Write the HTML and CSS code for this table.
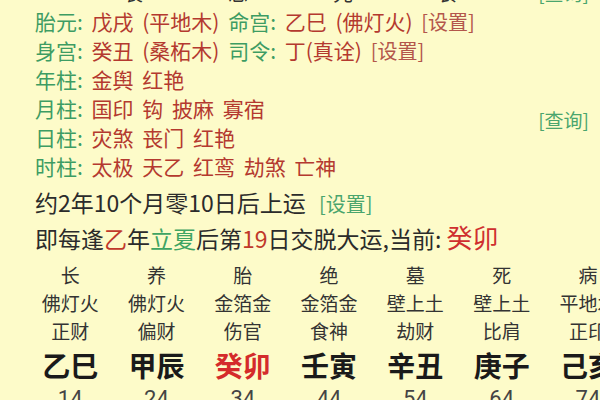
FILE: index.html
```html
<!DOCTYPE html>
<html lang="zh-CN">
<head>
<meta charset="utf-8">
<title>八字</title>
<link rel="stylesheet" href="styles.css">
</head>
<body>
<div class="page">
  <div class="cut-row">
    <span class="cut-chars">
      <span class="cut-c">衰</span><span class="cut-c">忌</span><span class="cut-c">先</span><span class="cut-c">食</span>
    </span>
    <span class="link link-green">[查询]</span>
  </div>
  <div class="info">
    <div class="row"><span class="lbl">胎元: </span><span class="val">戊戌 (平地木)</span> <span class="lbl">命宫: </span><span class="val">乙巳 (佛灯火)</span> <span class="link link-red">[设置]</span></div>
    <div class="row"><span class="lbl">身宫: </span><span class="val">癸丑 (桑柘木)</span> <span class="lbl">司令: </span><span class="val">丁(真诠)</span> <span class="link link-red">[设置]</span></div>
    <div class="row"><span class="lbl">年柱: </span><span class="val">金舆 红艳</span></div>
    <div class="row"><span class="lbl">月柱: </span><span class="val">国印 钩 披麻 寡宿</span></div>
    <div class="row"><span class="lbl">日柱: </span><span class="val">灾煞 丧门 红艳</span></div>
    <div class="row"><span class="lbl">时柱: </span><span class="val">太极 天乙 红鸾 劫煞 亡神</span></div>
    <span class="link link-green query">[查询]</span>
  </div>
  <div class="yun">
    <div class="yun-row">约2年10个月零10日后上运 <span class="link link-green small">[设置]</span></div>
    <div class="yun-row">即每逢<span class="red">乙</span>年<span class="green">立夏</span>后第<span class="red">19</span>日交脱大运,当前: <span class="cur">癸卯</span></div>
  </div>
  <div class="dayun">
    <div class="col"><div class="c1">长</div><div class="c2">佛灯火</div><div class="c3">正财</div><div class="c4">乙巳</div><div class="c5">14</div></div>
    <div class="col"><div class="c1">养</div><div class="c2">佛灯火</div><div class="c3">偏财</div><div class="c4">甲辰</div><div class="c5">24</div></div>
    <div class="col"><div class="c1">胎</div><div class="c2">金箔金</div><div class="c3">伤官</div><div class="c4 hot">癸卯</div><div class="c5">34</div></div>
    <div class="col"><div class="c1">绝</div><div class="c2">金箔金</div><div class="c3">食神</div><div class="c4">壬寅</div><div class="c5">44</div></div>
    <div class="col"><div class="c1">墓</div><div class="c2">壁上土</div><div class="c3">劫财</div><div class="c4">辛丑</div><div class="c5">54</div></div>
    <div class="col"><div class="c1">死</div><div class="c2">壁上土</div><div class="c3">比肩</div><div class="c4">庚子</div><div class="c5">64</div></div>
    <div class="col"><div class="c1">病</div><div class="c2">平地木</div><div class="c3">正印</div><div class="c4">己亥</div><div class="c5">74</div></div>
  </div>
</div>
</body>
</html>
```

FILE: styles.css
```css
html, body {
  margin: 0;
  padding: 0;
}
body {
  width: 600px;
  height: 400px;
  overflow: hidden;
  background: #fdfbc9;
  font-family: "Noto Sans CJK SC", "Noto Sans", sans-serif;
  color: #2a2a2a;
}
.page {
  width: 600px;
  height: 400px;
  overflow: hidden;
}
.cut-row {
  display: flex;
  justify-content: space-between;
  align-items: center;
  height: 29px;
  margin-top: -22px;
  padding: 0 11px 0 0;
  font-size: 20px;
  line-height: 29px;
}
.cut-chars {
  display: flex;
  padding-left: 123px;
  gap: 85px;
  color: #333;
}
.cut-c {
  width: 20px;
}
.info {
  display: grid;
  grid-template-columns: 1fr auto;
  padding: 0 11px 0 35px;
}
.row {
  grid-column: 1;
  font-size: 21px;
  line-height: 29px;
  word-spacing: 4px;
  white-space: nowrap;
}
.lbl { color: #3d9c63; }
.val { color: #b4392f; }
.link { font-size: 19px; }
.row .link { font-size: 20px; }
.link-red { color: #b3564b; }
.link-green { color: #4aa56d; }
.query {
  grid-column: 2;
  grid-row: 4 / 6;
  align-self: center;
  padding-bottom: 8px;
}
.yun {
  padding-left: 35px;
  padding-top: 3px;
  font-size: 23px;
  color: #2b2b2b;
}
.yun-row {
  height: 36px;
  line-height: 36px;
  white-space: nowrap;
}
.small { font-size: 20px; margin-left: 8px; line-height: 1; }
.red { color: #c0392b; }
.green { color: #3fa463; }
.cur { color: #cf2f2f; font-size: 26px; line-height: 1; }
.dayun {
  display: grid;
  grid-template-columns: repeat(7, 86.3px);
  padding-left: 27px;
  padding-top: 5px;
  text-align: center;
  white-space: nowrap;
}
.c1, .c2, .c3 {
  font-size: 19px;
  line-height: 28px;
  color: #333;
}
.c4 {
  font-size: 28px;
  line-height: 41px;
  font-weight: 700;
  color: #1a1a1a;
}
.c4.hot { color: #d42b2b; }
.c5 {
  font-family: Roboto, "Noto Sans", sans-serif;
  font-size: 22px;
  line-height: 26px;
  color: #444;
}
```
